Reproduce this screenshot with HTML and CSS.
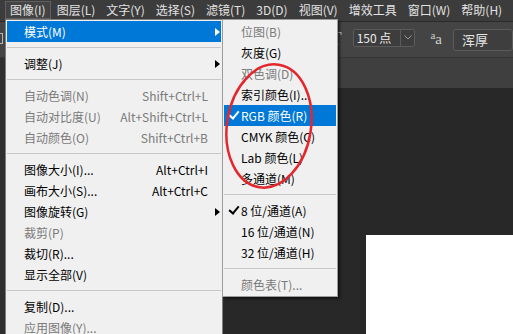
FILE: index.html
```html
<!DOCTYPE html>
<html lang="zh-CN">
<head>
    <meta charset="UTF-8">
    <meta name="viewport" content="width=device-width, initial-scale=1.0">
    <title>图像 - 模式</title>
    <link rel="stylesheet" href="styles.css">
</head>
<body>
<div class="app">
    <div class="menubar">
        <div class="top-item open">图像(I)</div>
        <div class="top-item">图层(L)</div>
        <div class="top-item">文字(Y)</div>
        <div class="top-item">选择(S)</div>
        <div class="top-item">滤镜(T)</div>
        <div class="top-item">3D(D)</div>
        <div class="top-item">视图(V)</div>
        <div class="top-item">增效工具</div>
        <div class="top-item">窗口(W)</div>
        <div class="top-item">帮助(H)</div>
    </div>

    <div class="options">
        <div class="tool-icon"></div>
        <div class="orient">T</div>
        <div class="size-field">
            <span class="size-value">150 点</span>
            <span class="size-drop">
                <svg width="8" height="5" viewBox="0 0 8 5"><path d="M0.5 0.5 L4 4 L7.5 0.5" fill="none" stroke="#9a9a9a" stroke-width="1"/></svg>
            </span>
        </div>
        <div class="aa"><span class="aa-small">a</span><span class="aa-big">a</span></div>
        <div class="aa-field">浑厚</div>
    </div>

    <div class="work">
        <div class="tools"></div>
        <div class="doc-area">
            <div class="tabs"></div>
            <div class="canvas">
                <div class="doc"></div>
            </div>
        </div>
    </div>

    <!-- 图像 menu -->
    <div class="menu main-menu">
        <div class="row active"><span class="label">模式(M)</span><span class="arrow"></span></div>
        <div class="sep"></div>
        <div class="row"><span class="label">调整(J)</span><span class="arrow"></span></div>
        <div class="sep"></div>
        <div class="row disabled"><span class="label">自动色调(N)</span><span class="key">Shift+Ctrl+L</span></div>
        <div class="row disabled"><span class="label">自动对比度(U)</span><span class="key">Alt+Shift+Ctrl+L</span></div>
        <div class="row disabled"><span class="label">自动颜色(O)</span><span class="key">Shift+Ctrl+B</span></div>
        <div class="sep"></div>
        <div class="row"><span class="label">图像大小(I)...</span><span class="key">Alt+Ctrl+I</span></div>
        <div class="row"><span class="label">画布大小(S)...</span><span class="key">Alt+Ctrl+C</span></div>
        <div class="row"><span class="label">图像旋转(G)</span><span class="arrow"></span></div>
        <div class="row disabled"><span class="label">裁剪(P)</span></div>
        <div class="row"><span class="label">裁切(R)...</span></div>
        <div class="row"><span class="label">显示全部(V)</span></div>
        <div class="sep"></div>
        <div class="row"><span class="label">复制(D)...</span></div>
        <div class="row disabled"><span class="label">应用图像(Y)...</span></div>
    </div>

    <!-- 模式 submenu -->
    <div class="menu sub-menu">
        <div class="row disabled"><span class="label">位图(B)</span></div>
        <div class="row"><span class="label">灰度(G)</span></div>
        <div class="row disabled"><span class="label">双色调(D)</span></div>
        <div class="row"><span class="label">索引颜色(I)...</span></div>
        <div class="row active checked"><span class="label">RGB 颜色(R)</span></div>
        <div class="row"><span class="label">CMYK 颜色(C)</span></div>
        <div class="row"><span class="label">Lab 颜色(L)</span></div>
        <div class="row"><span class="label">多通道(M)</span></div>
        <div class="sep"></div>
        <div class="row checked"><span class="label">8 位/通道(A)</span></div>
        <div class="row"><span class="label">16 位/通道(N)</span></div>
        <div class="row"><span class="label">32 位/通道(H)</span></div>
        <div class="sep"></div>
        <div class="row disabled"><span class="label">颜色表(T)...</span></div>
    </div>

    <!-- red annotation ring -->
    <svg class="mark" width="513" height="334" viewBox="0 0 513 334">
        <ellipse cx="269" cy="126" rx="42" ry="62" transform="rotate(9 269 126)" fill="none" stroke="#e3272d" stroke-width="2.5"/>
    </svg>
</div>
</body>
</html>
```

FILE: styles.css
```css
body {
    margin: 0;
    background-color: #282828;
    font-family: "Noto Sans CJK SC", "Microsoft YaHei", sans-serif;
    font-size: 12px;
    overflow: hidden;
}

.app {
    position: relative;
    width: 513px;
    height: 334px;
    display: flex;
    flex-direction: column;
    overflow: hidden;
}

/* Top menu bar */
.menubar {
    height: 21px;
    background-color: #3c3c3c;
    border-bottom: 1px solid #2a2a2a;
    display: flex;
    align-items: flex-start;
    gap: 1px;
    padding-left: 5px;
    color: #e2e2e2;
    flex-shrink: 0;
}

.top-item {
    margin-top: 1px;
    height: 18px;
    line-height: 17px;
    padding: 0 5px;
    white-space: nowrap;
}

.top-item.open {
    background-color: #434343;
    box-shadow: inset 0 0 0 1px #5f5f5f;
}

/* Options bar */
.options {
    height: 35px;
    background-color: #444444;
    border-bottom: 1px solid #363636;
    display: flex;
    align-items: center;
    flex-shrink: 0;
    color: #e4e4e4;
}

.tool-icon {
    width: 10px;
    height: 9px;
    border: 1px solid #b8b8b8;
    margin-left: -7px;
    margin-top: -3px;
}

.orient {
    margin-left: 327px;
    font-family: "Liberation Serif", serif;
    font-size: 19px;
    line-height: 19px;
    color: #cfcfcf;
    margin-top: -2px;
}

.size-field {
    margin-left: 11px;
    width: 77px;
    height: 18px;
    box-sizing: border-box;
    border: 1px solid #5b5b5b;
    border-radius: 2px;
    background-color: #3d3d3d;
    display: flex;
    align-items: center;
    margin-top: -4px;
}

.size-value {
    flex: 1;
    padding-left: 3px;
    line-height: 16px;
    color: #ececec;
}

.size-drop {
    width: 13px;
    height: 16px;
    border-left: 1px solid #5b5b5b;
    display: flex;
    align-items: center;
    justify-content: center;
}

.aa {
    margin-left: 15px;
    font-family: "Liberation Serif", serif;
    color: #cfcfcf;
    display: flex;
    align-items: flex-start;
    margin-top: -2px;
}

.aa-small {
    font-size: 11px;
    line-height: 11px;
}

.aa-big {
    font-size: 15px;
    line-height: 15px;
    margin-top: 2px;
}

.aa-field {
    margin-left: 11px;
    width: 60px;
    height: 22px;
    box-sizing: border-box;
    border: 1px solid #5b5b5b;
    border-radius: 3px;
    background-color: #3e3e3e;
    padding-left: 8px;
    line-height: 20px;
    font-size: 13px;
    flex-shrink: 0;
}

/* Work area */
.work {
    flex: 1;
    display: flex;
}

.tools {
    width: 36px;
    background-color: #2f2f2f;
}

.doc-area {
    flex: 1;
    display: flex;
    flex-direction: column;
}

.tabs {
    height: 30px;
    background-color: #3f3f3f;
}

.canvas {
    flex: 1;
    background-color: #282828;
    padding-top: 147px;
    padding-left: 330px;
}

.doc {
    height: 100px;
    background-color: #ffffff;
}

/* Drop-down menus */
.menu {
    position: absolute;
    top: 19px;
    background-color: #f0f0f0;
    border: 1px solid #a0a0a0;
    padding: 1px;
    color: #000000;
}

.main-menu {
    left: 5px;
    width: 214px;
    height: 330px;
    border-color: #7d7d7d;
}

.sub-menu {
    left: 222px;
    width: 112px;
    border-color: #9c9c9c;
    box-shadow: 2px 2px 2px rgba(0, 0, 0, 0.55);
}

.row {
    position: relative;
    height: 21px;
    display: flex;
    align-items: center;
    padding-left: 17px;
    padding-right: 1px;
    white-space: nowrap;
}

.row .label {
    line-height: 21px;
}

.row .key {
    margin-left: auto;
    padding-right: 12px;
}

.row .arrow {
    margin-left: auto;
    width: 0;
    height: 0;
    border-left: 5px solid #000000;
    border-top: 4px solid transparent;
    border-bottom: 4px solid transparent;
}

.row.disabled {
    color: #7a7a7a;
}

.row.active {
    background-color: #0078d7;
    color: #ffffff;
}

.row.active .arrow {
    border-left-color: #ffffff;
}

.row.checked::before {
    content: "";
    position: absolute;
    left: 5px;
    top: 6px;
    width: 8px;
    height: 4px;
    border-left: 2px solid currentColor;
    border-bottom: 2px solid currentColor;
    transform: rotate(-50deg);
}

.sep {
    height: 1px;
    margin: 5px 0;
    background-color: #c8c8c8;
}

.mark {
    position: absolute;
    left: 0;
    top: 0;
    pointer-events: none;
}
```
